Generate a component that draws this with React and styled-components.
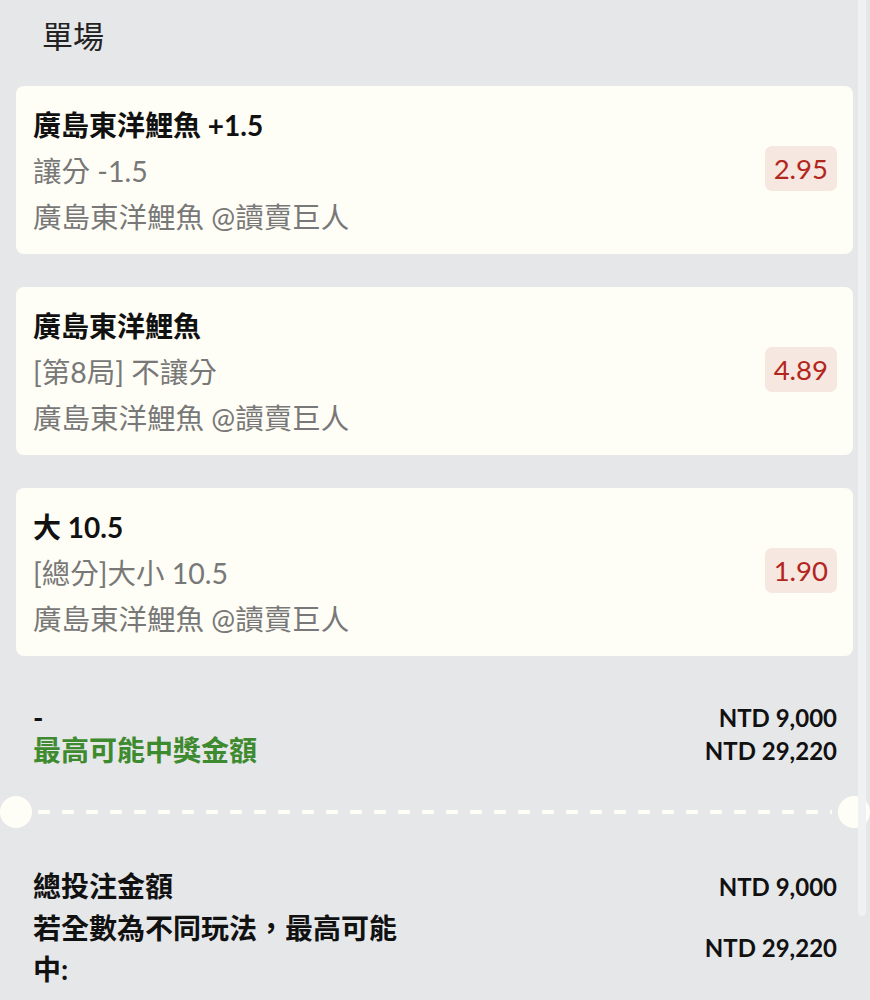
import React from "react";
import styled, { createGlobalStyle } from "styled-components";

const GlobalStyle = createGlobalStyle`
  html, body {
    margin: 0;
    padding: 0;
    background: #e6e7e9;
  }
  body {
    font-family: "Lato", "Noto Sans CJK TC", sans-serif;
    color: #1c1c1c;
  }
`;

const Page = styled.div`
  position: relative;
  min-height: 1000px;
  padding: 0 17px 0 16px;
  box-sizing: border-box;
  overflow: hidden;
`;

const ScrollThumb = styled.div`
  position: fixed;
  top: 0;
  right: 4px;
  width: 8px;
  height: 916px;
  background: #f0f1f3;
  border-radius: 0 0 4px 4px;
  z-index: 5;
`;

const Header = styled.h2`
  margin: 0;
  padding: 14px 0 0 26px;
  height: 70px;
  box-sizing: border-box;
  font-size: 31px;
  line-height: 44px;
  font-weight: 400;
  color: #222;
`;

const CardList = styled.div`
  display: flex;
  flex-direction: column;
  gap: 33px;
  padding-top: 16px;
`;

const Card = styled.div`
  background: #fffef6;
  border-radius: 8px;
  height: 168px;
  box-sizing: border-box;
  padding: 16px 16px 14px 17px;
  display: flex;
  align-items: center;
  justify-content: space-between;
`;

const Info = styled.div`
  display: flex;
  flex-direction: column;
  align-self: flex-start;
`;

const Line = styled.div`
  font-size: ${(p) => (p.$bold ? "28px" : "28.5px")};
  line-height: 46px;
  font-weight: ${(p) => (p.$bold ? 700 : 400)};
  color: ${(p) => (p.$bold ? "#111" : "#787878")};
  white-space: nowrap;
`;

const Odds = styled.div`
  background: #f6e7e0;
  color: #b3261e;
  border-radius: 7px;
  height: 45px;
  padding: 0 9px;
  display: flex;
  align-items: center;
  font-size: 27.5px;
  font-weight: 400;
  margin-top: -6px;
`;

const Summary = styled.div`
  display: grid;
  grid-template-columns: 1fr auto;
  padding: 0 16px 0 17px;
  margin-top: 45px;
`;

const SumLabel = styled.div`
  font-size: 28px;
  line-height: 33px;
  font-weight: 700;
  color: ${(p) => p.$color || "#111"};
`;

const SumValue = styled.div`
  font-size: 24px;
  line-height: 33px;
  font-weight: 700;
  text-align: right;
  color: #111;
`;

const Divider = styled.div`
  margin: 29px -17px 0 -16px;
  height: 32px;
  display: flex;
  align-items: center;
  justify-content: space-between;
`;

const Hole = styled.div`
  width: 32px;
  height: 32px;
  border-radius: 50%;
  background: #fffef6;
  flex: none;
`;

const Dashes = styled.div`
  flex: 1;
  height: 4px;
  margin: 0 6px;
  background: repeating-linear-gradient(
    to right,
    #fffef6 0 12px,
    transparent 12px 24px
  );
`;

const Totals = styled.div`
  display: flex;
  flex-direction: column;
  padding: 0 16px 0 17px;
  margin-top: 38px;
`;

const TotalRow = styled.div`
  display: flex;
  align-items: center;
  justify-content: space-between;
`;

const TotalLabel = styled.div`
  font-size: 28px;
  line-height: 41.5px;
  font-weight: 700;
  color: #111;
  max-width: 385px;
`;

const TotalValue = styled.div`
  font-size: 24px;
  font-weight: 700;
  color: #111;
  white-space: nowrap;
  margin-top: ${(p) => (p.$shift ? "-3px" : "0")};
`;

const bets = [
  { title: "廣島東洋鯉魚 +1.5", market: "讓分 -1.5", match: "廣島東洋鯉魚 @讀賣巨人", odds: "2.95" },
  { title: "廣島東洋鯉魚", market: "[第8局] 不讓分", match: "廣島東洋鯉魚 @讀賣巨人", odds: "4.89" },
  { title: "大 10.5", market: "[總分]大小 10.5", match: "廣島東洋鯉魚 @讀賣巨人", odds: "1.90" },
];

export default function App() {
  return (
    <>
      <GlobalStyle />
      <Page>
        <ScrollThumb />
        <Header>單場</Header>
        <CardList>
          {bets.map((b, i) => (
            <Card key={i}>
              <Info>
                <Line $bold>{b.title}</Line>
                <Line>{b.market}</Line>
                <Line>{b.match}</Line>
              </Info>
              <Odds>{b.odds}</Odds>
            </Card>
          ))}
        </CardList>
        <Summary>
          <SumLabel>-</SumLabel>
          <SumValue>NTD 9,000</SumValue>
          <SumLabel $color="#3d8a2f">最高可能中獎金額</SumLabel>
          <SumValue>NTD 29,220</SumValue>
        </Summary>
        <Divider>
          <Hole />
          <Dashes />
          <Hole />
        </Divider>
        <Totals>
          <TotalRow>
            <TotalLabel>總投注金額</TotalLabel>
            <TotalValue>NTD 9,000</TotalValue>
          </TotalRow>
          <TotalRow>
            <TotalLabel>若全數為不同玩法，最高可能中:</TotalLabel>
            <TotalValue $shift>NTD 29,220</TotalValue>
          </TotalRow>
        </Totals>
      </Page>
    </>
  );
}
